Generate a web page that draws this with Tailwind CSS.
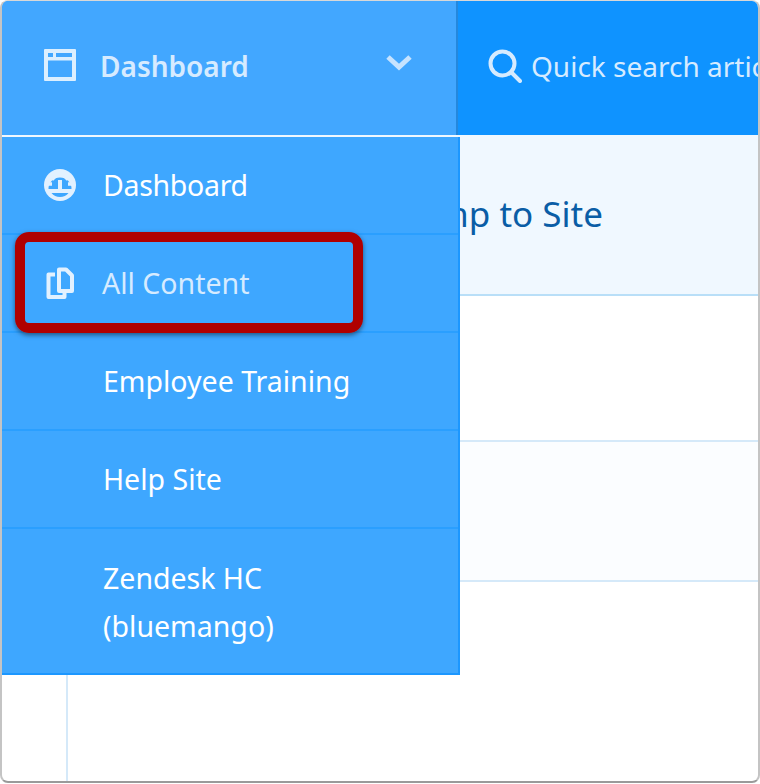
<!DOCTYPE html>
<html lang="en">
<head>
  <meta charset="UTF-8">
  <meta name="viewport" content="width=device-width, initial-scale=1.0">
  <title>All Content</title>
  <script src="https://cdn.jsdelivr.net/npm/@tailwindcss/browser@4"></script>
</head>
<body class="bg-white font-['Noto_Sans',sans-serif]">

  <div class="relative w-[760px] h-[784px] overflow-hidden bg-white">
    <!-- window -->
    <div class="relative h-[783px] overflow-hidden rounded-[8px] border-x-2 border-b-2 border-t border-x-[#c4c4c4] border-b-[#9a9a9a] border-t-[#d8d8d8] bg-white">

      <!-- top bar -->
      <div class="flex h-[134px] bg-[#0f93ff]">
        <div class="flex w-[456px] shrink-0 border-r-2 border-r-[#2488dd] bg-[#42a7ff] pb-[2px]">
          <svg class="ml-[42px] mt-[48px] h-[32px] w-[32px] text-[#dcefff]" viewBox="0 0 32 32" fill="currentColor">
            <path fill-rule="evenodd" d="M1 0h30a1 1 0 0 1 1 1v30a1 1 0 0 1-1 1H1a1 1 0 0 1-1-1V1a1 1 0 0 1 1-1zM4 4v4h5V4zM12 4v4h16V4zM4 11.500V28h24V11.500z"/>
          </svg>
          <span class="ml-[24px] mt-[43px] text-[28px] leading-[44px] font-semibold text-[#d6ebff]">Dashboard</span>
          <svg class="ml-[137px] mt-[52px] h-[18px] w-[26px] text-[#c6e3ff]" viewBox="0 0 26 18" fill="none" stroke="currentColor" stroke-width="5">
            <path d="M2 4l11 10L24 4"/>
          </svg>
        </div>
        <div class="flex min-w-0 flex-1 overflow-hidden">
          <svg class="ml-[30px] mt-[48px] h-[34px] w-[34px] shrink-0 text-[#d6ebff]" viewBox="0 0 34 34" fill="none" stroke="currentColor" stroke-width="4">
            <circle cx="14.500" cy="14.500" r="12"/>
            <path d="M23 23l9 9" stroke-linecap="round"/>
          </svg>
          <span class="ml-[9px] mt-[43px] whitespace-nowrap text-[28px] leading-[44px] text-[#d6ebff]">Quick search articles</span>
        </div>
      </div>

      <!-- content rows -->
      <div class="flex h-[161px] items-center justify-end border-b-2 border-b-[#b9dff8] bg-[#f0f8ff] pb-[0px] pr-[155px]">
        <span class="text-[35px] text-[#0a5da6]">Jump to Site</span>
      </div>
      <div class="h-[146px] border-b-2 border-b-[#d5e9f9] bg-white"></div>
      <div class="h-[140px] border-b-2 border-b-[#d5e9f9] bg-[#fbfdff]"></div>
      <div class="ml-[64px] h-[200px] border-l-2 border-l-[#d5e9f9]"></div>

      <!-- dropdown menu -->
      <div class="absolute left-0 top-[136px] w-[458px] border-r-2 border-b-2 border-r-[#1c97ff] border-b-[#1c97ff] bg-[#3ea7ff] text-[28.5px] text-white">
        <div class="flex h-[98px] items-center border-b-2 border-b-[#2a9fff] pt-[1px]">
          <svg class="ml-[42px] h-[32px] w-[32px] -translate-y-[1px]" viewBox="0 0 32 32">
            <circle cx="16" cy="16" r="16" fill="#e2f1ff"/>
            <path d="M4.500 20A11.500 11.500 0 1 1 27.500 20z" fill="#3ea7ff"/>
            <path d="M16 4v4M8 8l2.500 2.500M24 8l-2.500 2.500M4.500 15h3.500M27.500 15H24" stroke="#e2f1ff" stroke-width="3.500"/>
            <path d="M16 11v10" stroke="#e2f1ff" stroke-width="4"/>
            <path d="M7.500 24h17c-2 2.500-5 4-8.500 4s-6.500-1.500-8.500-4z" fill="#3ea7ff"/>
          </svg>
          <span class="ml-[27px] tracking-[-0.3px]">Dashboard</span>
        </div>
        <div class="flex h-[98px] items-center border-b-2 border-b-[#2a9fff] pt-[1px]">
          <svg class="ml-[44px] h-[32px] w-[28px] -translate-y-[1px] text-[#e2f1ff]" viewBox="0 0 28 32" fill="none" stroke="currentColor" stroke-width="4" stroke-linejoin="round">
            <path d="M13 2.500h7l6 6v15.500H13z"/>
            <path d="M9 7.500H2.500V30h16v-5"/>
          </svg>
          <span class="ml-[28px] text-[#d6ebff]">All Content</span>
        </div>
        <div class="flex h-[98px] items-center border-b-2 border-b-[#2a9fff] pt-[1px] pl-[101px]">
          <span>Employee Training</span>
        </div>
        <div class="flex h-[98px] items-center border-b-2 border-b-[#2a9fff] pt-[1px] pl-[101px]">
          <span>Help Site</span>
        </div>
        <div class="pl-[101px] pt-[25px] pb-[23px] leading-[48px]">
          Zendesk HC<br>(bluemango)
        </div>
      </div>
    </div>

    <!-- red annotation box -->
    <div class="absolute left-[15px] top-[232px] h-[101px] w-[348px] rounded-[14px] border-[10px] border-[#b00000] shadow-[0_2px_5px_rgba(0,0,0,0.5)]"></div>
  </div>

</body>
</html>
